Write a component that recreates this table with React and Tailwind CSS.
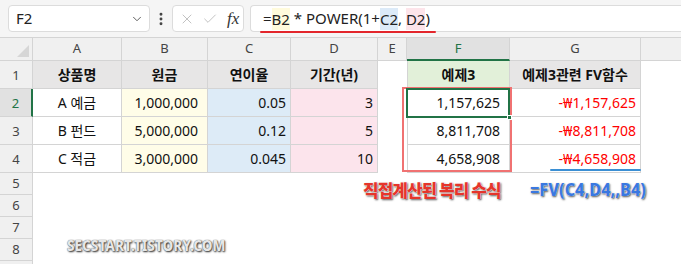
import { ChevronDown, EllipsisVertical, X, Check } from "lucide-react";

const COLS = ["A", "B", "C", "D", "E", "F", "G"];

const rows = [
  ["상품명", "원금", "연이율", "기간(년)", "", "예제3", "예제3관련 FV함수"],
  ["A 예금", "1,000,000", "0.05", "3", "", "1,157,625", "-₩1,157,625"],
  ["B 펀드", "5,000,000", "0.12", "5", "", "8,811,708", "-₩8,811,708"],
  ["C 적금", "3,000,000", "0.045", "10", "", "4,658,908", "-₩4,658,908"],
];

// per-column look for the data rows
const colStyle = [
  "justify-center bg-white border-r border-b border-[#d4d4d4]",
  "justify-end pr-[9px] bg-[#fffde8] border-r border-b border-[#d4d4d4]",
  "justify-end pr-1 bg-[#ddebf7] border-r border-b border-[#d4d4d4]",
  "justify-end pr-1 bg-[#fce4ec] border-r border-b border-[#d4d4d4]",
  "bg-white",
  "justify-end pr-[9px] bg-white border-l border-r border-b border-[#d4d4d4]",
  "justify-end pr-1 bg-white text-[#ff0000] border-r border-b border-[#d4d4d4]",
];

const headStyle = [
  "bg-[#e7e6e6] border-r border-b border-[#d4d4d4]",
  "bg-[#e7e6e6] border-r border-b border-[#d4d4d4]",
  "bg-[#e7e6e6] border-r border-b border-[#d4d4d4]",
  "bg-[#e7e6e6] border-r border-b border-[#d4d4d4]",
  "bg-white",
  "bg-[#e2f0d9] border-l border-r border-b border-[#d4d4d4]",
  "bg-[#e7e6e6] border-r border-b border-[#d4d4d4]",
];

function FormulaBar() {
  return (
    <div className="flex items-start h-[38px] bg-[#f5f5f5] border-b border-[#d4d4d4] pt-[5px]">
      <div className="ml-2 w-[142px] h-[27px] flex items-center justify-between pl-[7px] pr-[5px] bg-white border border-[#dcdcdc] rounded-[4px] text-[15px] text-[#222]">
        <span>F2</span>
        <ChevronDown size={14} strokeWidth={1.6} className="text-[#555]" />
      </div>
      <div className="w-[22px] h-[27px] flex items-center justify-center text-[#444]">
        <EllipsisVertical size={16} strokeWidth={2.4} />
      </div>
      <div className="w-[72px] h-[27px] flex items-center gap-[7px] pl-[6px] bg-white border border-[#dcdcdc] rounded-[4px]">
        <X size={16} strokeWidth={1.3} className="text-[#b8b8b8]" />
        <Check size={16} strokeWidth={1.3} className="text-[#b8b8b8]" />
        <span className="font-['Liberation_Serif',serif] italic text-[17px] text-[#333] ml-[2px]">fx</span>
      </div>
      <div className="relative ml-[6px] flex-1 h-[27px] flex items-center pl-[12px] bg-white border border-r-0 border-[#dcdcdc] rounded-l-[4px] text-[15px] text-[#222] whitespace-pre">
        <span>=</span>
        <span className="bg-[#fffbdc] leading-[22px]">B2</span>
        <span> * POWER(1+</span>
        <span className="bg-[#dceaf8] leading-[22px]">C2</span>
        <span>, </span>
        <span className="bg-[#fde4ea] leading-[22px]">D2</span>
        <span>)</span>
        <div className="absolute left-[9px] top-[25px] w-[176px] h-[2px] rounded-full bg-[#e3262c]" />
      </div>
    </div>
  );
}

export default function App() {
  return (
    <div className="relative w-[681px] h-[264px] overflow-hidden bg-white font-['Noto_Sans','Noto_Sans_CJK_KR',sans-serif] text-[14px] text-[#111]">
      <FormulaBar />

      <div className="grid grid-cols-[33px_89px_86px_83px_87px_29px_103px_131px_1fr] grid-rows-[23px_28px_28px_28px_28px_22px_22px_22px_22px_22px]">
        {/* column headers */}
        <div className="relative bg-[#f0f0f0] border-r border-b border-[#d4d4d4]">
          <div className="absolute right-[3px] bottom-[3px] w-0 h-0 border-l-[12px] border-l-transparent border-b-[12px] border-b-[#d6d6d6]" />
        </div>
        {COLS.map((c) =>
          c === "F" ? (
            <div
              key={c}
              className="flex items-center justify-center bg-[#e1e1e1] border-r border-[#d4d4d4] border-b-2 border-b-[#217346] text-[13px] text-[#217346]"
            >
              {c}
            </div>
          ) : (
            <div
              key={c}
              className="flex items-center justify-center bg-[#f0f0f0] border-r border-b border-[#d4d4d4] text-[13px] text-[#444]"
            >
              {c}
            </div>
          )
        )}
        <div className="bg-[#f0f0f0] border-b border-[#d4d4d4]" />

        {/* table rows */}
        {rows.map((r, ri) => (
          <RowCells key={ri} r={r} ri={ri} />
        ))}

        {/* empty rows */}
        {[5, 6, 7, 8].map((n) => (
          <EmptyRow key={n} n={n} />
        ))}
        <div className="bg-[#f0f0f0] border-r border-[#d4d4d4]" />
        <div className="col-span-8 bg-white" />
      </div>

      {/* annotations */}
      <div className="absolute left-[402px] top-[87px] w-[110px] h-[85px] border-2 border-[#f07272]" />
      <div className="absolute left-[406px] top-[88px] w-[104px] h-[30px] border-2 border-[#217346]" />
      <div className="absolute left-[507px] top-[115px] w-[5px] h-[5px] bg-[#217346] border border-white" />
      <div className="absolute left-[550px] top-[169px] w-[91px] h-[2px] bg-[#3a8fd4] rounded-full" />

      <div className="absolute left-[363px] top-[177px] text-[17px] font-black tracking-[-1px] text-[#e5352b] font-['Noto_Sans_CJK_KR',sans-serif] [text-shadow:0_0_1px_#fff,0_0_1px_#fff,1px_1px_2px_rgba(0,0,0,0.75)]">
        직접계산된 복리 수식
      </div>
      <div className="absolute left-[530px] top-[176px] text-[18px] font-extrabold text-[#3a78e0] scale-x-[0.9] origin-left font-['Noto_Sans',sans-serif] [text-shadow:0_0_1px_#fff,0_0_1px_#fff,1px_1px_2px_rgba(0,0,0,0.75)]">
        =FV(C4,D4,,B4)
      </div>
      <div className="absolute left-[67px] top-[234px] text-[15px] font-extrabold text-[#e6e6e6] scale-x-[0.9] origin-left font-['Noto_Sans',sans-serif] [text-shadow:0_0_1px_#444,1px_1px_2px_rgba(0,0,0,0.85)]">
        SECSTART.TISTORY.COM
      </div>
    </div>
  );
}

function RowCells({ r, ri }) {
  const isHead = ri === 0;
  const selected = ri === 1;
  return (
    <>
      <div
        className={
          "flex items-end justify-center pb-[3px] border-b border-[#d4d4d4] text-[13px] " +
          (selected
            ? "bg-[#e1e1e1] border-r-2 border-r-[#217346] text-[#217346]"
            : "bg-[#f0f0f0] border-r border-r-[#d4d4d4] text-[#444]")
        }
      >
        {ri + 1}
      </div>
      {r.map((v, ci) => (
        <div
          key={ci}
          className={
            "flex items-center whitespace-nowrap " +
            (isHead ? "justify-center font-bold " + headStyle[ci] : colStyle[ci])
          }
        >
          {v}
        </div>
      ))}
      <div className="bg-white" />
    </>
  );
}

function EmptyRow({ n }) {
  return (
    <>
      <div className="flex items-center justify-center bg-[#f0f0f0] border-r border-b border-[#d4d4d4] text-[13px] text-[#444]">
        {n}
      </div>
      <div className="col-span-8 bg-white" />
    </>
  );
}
